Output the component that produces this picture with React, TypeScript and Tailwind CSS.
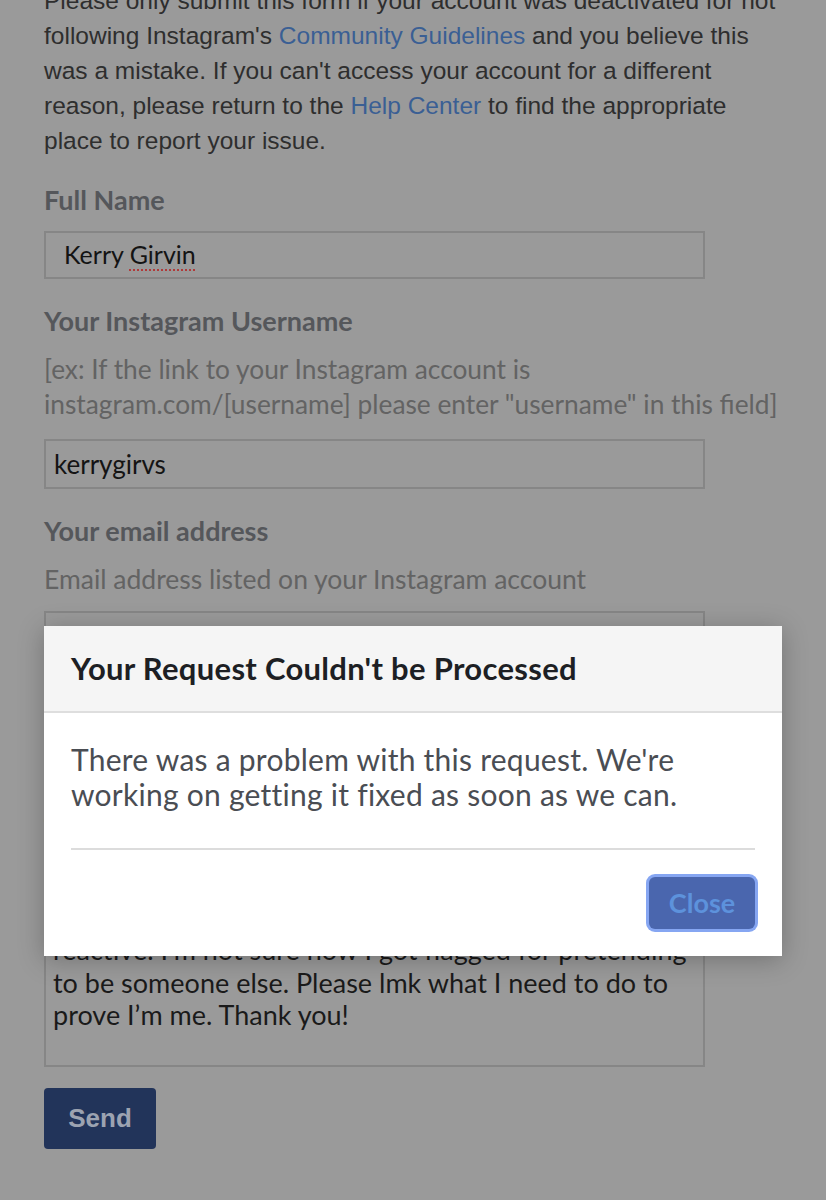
import React from "react";

const helv = { fontFamily: '"Liberation Sans", Arial, sans-serif' };

export default function App() {
  return (
    <div className="relative w-[826px] h-[1200px] overflow-hidden bg-[#9a9a9a]" style={{ fontFamily: 'Lato, "Open Sans", sans-serif' }}>
      <div className="px-[44px]">
        {/* intro paragraph (scrolled, first line clipped) */}
        <div className="-mt-[17px] text-[24.5px] leading-[35px] text-[#2e2e2e]" style={helv}>
          <div className="whitespace-nowrap">Please only submit this form if your account was deactivated for not</div>
          <div className="whitespace-nowrap">
            following Instagram's <span className="text-[#3a5f94]">Community Guidelines</span> and you believe this
          </div>
          <div className="whitespace-nowrap">was a mistake. If you can't access your account for a different</div>
          <div className="whitespace-nowrap">
            reason, please return to the <span className="text-[#3a5f94]">Help Center</span> to find the appropriate
          </div>
          <div className="whitespace-nowrap">place to report your issue.</div>
        </div>

        {/* Full name */}
        <div className="mt-[27px] text-[27px] leading-[30px] font-bold text-[#55575b]">Full Name</div>
        <div className="mt-[16px] w-[661px] h-[48px] border-2 border-[#868686] flex items-center pl-[18px] text-[25px] text-[#141414]">
          <span>
            Kerry{" "}
            <span className="underline decoration-dotted decoration-[#b03a3a] decoration-2 underline-offset-[5px]">Girvin</span>
          </span>
        </div>

        {/* Username */}
        <div className="mt-[27px] text-[27px] leading-[30px] font-bold text-[#55575b]">Your Instagram Username</div>
        <div className="mt-[16px] text-[26.3px] leading-[35px] text-[#636363]">
          <div className="whitespace-nowrap">[ex: If the link to your Instagram account is</div>
          <div className="whitespace-nowrap">instagram.com/[username] please enter "username" in this field]</div>
        </div>
        <div className="mt-[17px] w-[661px] h-[50px] border-2 border-[#868686] flex items-center pl-[8px] text-[26px] text-[#141414]">
          kerrygirvs
        </div>

        {/* Email */}
        <div className="mt-[27px] text-[27px] leading-[30px] font-bold text-[#55575b]">Your email address</div>
        <div className="mt-[16px] text-[26.5px] leading-[35px] text-[#636363] whitespace-nowrap">
          Email address listed on your Instagram account
        </div>
        <div className="mt-[14px] w-[661px] h-[50px] border-2 border-[#868686]" />

        {/* Explanation (mostly hidden by the dialog) */}
        <div className="mt-[152px] text-[27px] leading-[30px] font-bold text-[#55575b]">Tell us more</div>
        <div className="mt-[16px] w-[661px] h-[208px] border-2 border-[#868686] pt-[8px] pl-[7px] text-[27px] leading-[32.5px] text-[#1a1a1a]">
          <div className="whitespace-nowrap">My account was disabled today and I'm</div>
          <div className="whitespace-nowrap">confused since I've never been anything but</div>
          <div className="whitespace-nowrap">reactive. I'm not sure how I got flagged for pretending</div>
          <div className="whitespace-nowrap">to be someone else. Please lmk what I need to do to</div>
          <div className="whitespace-nowrap">prove I’m me. Thank you!</div>
        </div>

        <button
          className="mt-[21px] w-[112px] h-[61px] rounded-[4px] bg-[#22345a] text-[26px] font-bold text-[#9ca3b1]"
          style={helv}
        >
          Send
        </button>
      </div>

      {/* Dialog */}
      <div className="absolute left-[44px] top-[626px] w-[738px] bg-white shadow-[0_4px_24px_rgba(0,0,0,0.25)]">
        <div className="h-[87px] bg-[#f5f5f5] border-b-2 border-[#dedede] flex items-center px-[27px]">
          <span className="text-[31px] tracking-[0.3px] font-bold text-[#1d1f24]">Your Request Couldn't be Processed</span>
        </div>
        <div className="px-[27px] pt-[29px]">
          <div className="text-[30px] tracking-[0.25px] leading-[35px] text-[#4a4d53]">
            <div className="whitespace-nowrap">There was a problem with this request. We're</div>
            <div className="whitespace-nowrap">working on getting it fixed as soon as we can.</div>
          </div>
          <div className="mt-[36px] border-t-2 border-[#dcdcdc]" />
          <div className="flex justify-end pt-[27px] pb-[27px]">
            <button className="w-[106px] h-[52px] rounded-[6px] bg-[#4a66ae] ring-[3px] ring-[#86a6f2] text-[27px] font-bold text-[#5d92dc]">
              Close
            </button>
          </div>
        </div>
      </div>
    </div>
  );
}
